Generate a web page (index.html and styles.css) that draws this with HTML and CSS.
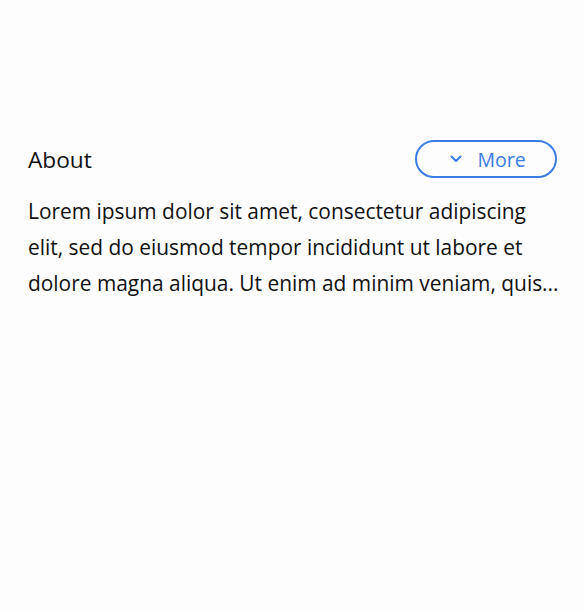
FILE: index.html
```html
<!DOCTYPE html>
<html>
<head>
<meta charset="utf-8">
<link rel="stylesheet" href="styles.css">
</head>
<body>
<section class="about">
  <div class="about-head">
    <h2 class="about-title">About</h2>
    <button class="more-btn">
      <svg class="chev" width="12" height="8" viewBox="0 0 12 8"><path d="M1.5 1.5 L6 6 L10.5 1.5" fill="none" stroke="#3b7ce4" stroke-width="2" stroke-linecap="round" stroke-linejoin="round"/></svg>
      <span>More</span>
    </button>
  </div>
  <p class="about-text">Lorem ipsum dolor sit amet, consectetur adipiscing elit, sed do eiusmod tempor incididunt ut labore et dolore magna aliqua. Ut enim ad minim veniam, quis...</p>
</section>
</body>
</html>
```

FILE: styles.css
```css
html, body {
  margin: 0;
  padding: 0;
  background: #fdfdfe;
}
body {
  font-family: "Open Sans", "Noto Sans", sans-serif;
  color: #111;
}
.about {
  padding: 140px 25px 0 28px;
}
.about-head {
  display: flex;
  justify-content: space-between;
  align-items: center;
  height: 38px;
  margin-right: 2px;
}
.about-title {
  margin: 0;
  font-weight: 400;
  font-size: 22.7px;
}
.more-btn {
  box-sizing: border-box;
  width: 142px;
  height: 38px;
  border: 2px solid #3b7ce4;
  border-radius: 19px;
  background: transparent;
  color: #3b7ce4;
  font-family: inherit;
  font-size: 19.5px;
  display: flex;
  align-items: center;
  justify-content: center;
  gap: 15px;
  padding: 0 0 0 4px;
}
.about-text {
  margin: 15px 0 0;
  font-size: 20.9px;
  line-height: 36px;
}
```
